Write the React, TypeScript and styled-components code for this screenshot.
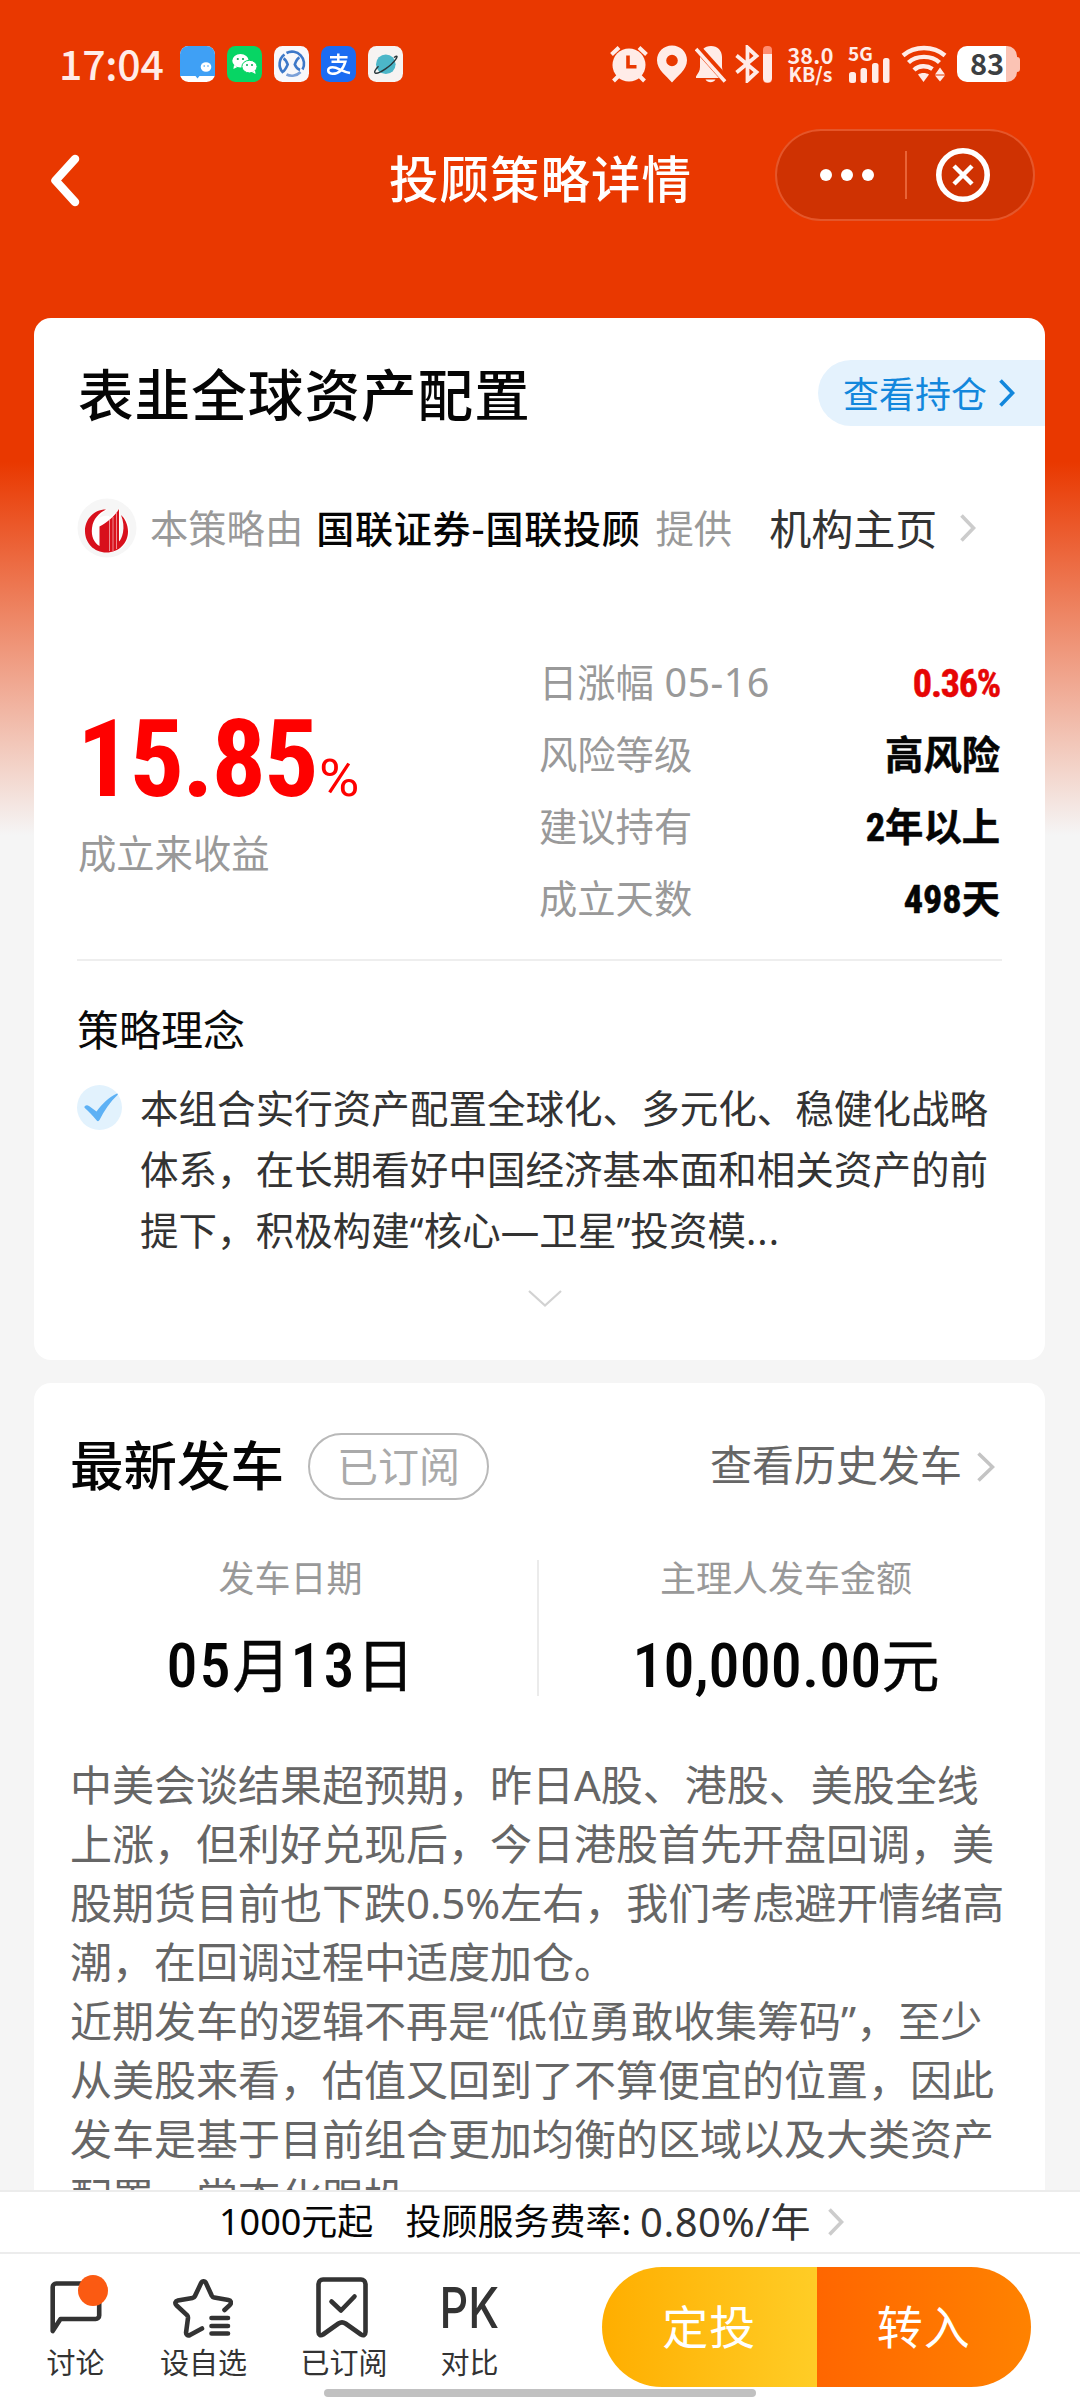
import React from "react";
import styled, { createGlobalStyle } from "styled-components";

const sans = `"Noto Sans", "Noto Sans CJK SC", sans-serif`;
const cjk = `"Noto Sans CJK SC", "Noto Sans", sans-serif`;
const din = `"Roboto Condensed", "Noto Sans CJK SC", sans-serif`;

const GlobalStyle = createGlobalStyle`
  * { box-sizing: border-box; }
  body { margin: 0; background: #f5f5f5; }
`;

const Screen = styled.div`
  width: 1080px;
  height: 2400px;
  display: flex;
  flex-direction: column;
  overflow: hidden;
  background: linear-gradient(180deg, #e93800 0, #e93800 462px, #f5f5f5 835px);
  font-family: ${sans};
  white-space: nowrap;
  svg { display: block; flex: none; }
`;

/* ---------- status bar ---------- */
const StatusBar = styled.div`
  height: 129px;
  padding: 46px 60px 47px 59px;
  display: flex;
  align-items: center;
  color: #ffece8;
`;
const Clock = styled.span`
  width: 121px;
  font: 500 41px/36px ${cjk};
  letter-spacing: -0.2px;
  margin-top: -4px;
`;
const AppIcons = styled.div`
  display: flex;
  gap: 12px;
`;
const StatusIcons = styled.div`
  margin-left: auto;
  display: flex;
  align-items: center;
  height: 38px;
`;
const NetSpeed = styled.div`
  margin-left: 14px;
  width: 47px;
  display: flex;
  flex-direction: column;
  align-items: center;
  font: 700 19.5px/19px "Noto Sans CJK SC", sans-serif;
  span:first-child { font-size: 21.5px; letter-spacing: 0.3px; }
`;
const Signal = styled.div`
  margin-left: 14px;
  width: 44px;
  height: 36px;
  display: flex;
  flex-direction: column;
  justify-content: space-between;
`;
const SignalLabel = styled.span`
  font: 700 19px/14px "Noto Sans CJK SC", sans-serif;
  height: 12px;
`;
const Gap = styled.i<{ $w: number }>`
  width: ${(p) => p.$w}px;
`;
const Battery = styled.div`
  display: flex;
  align-items: center;
  margin-left: 10px;
`;
const BatteryBody = styled.div`
  width: 60px;
  height: 36px;
  border-radius: 10px;
  display: flex;
  align-items: center;
  justify-content: center;
  background: linear-gradient(90deg, #fff 0, #fff 49px, #fbc3b4 49px);
  color: #3c3f42;
  font: 600 29px/33px "Noto Sans CJK SC", sans-serif;
  padding-bottom: 3px;
`;
const BatteryTip = styled.i`
  width: 3px;
  height: 15px;
  border-radius: 0 3px 3px 0;
  background: #fbc3b4;
`;

/* ---------- navigation ---------- */
const NavBar = styled.div`
  height: 91px;
  margin-bottom: 98px;
  padding: 0 45px 0 46px;
  display: grid;
  grid-template-columns: 260px 1fr 260px;
  align-items: center;
  color: #fff;
`;
const NavTitle = styled.h1`
  margin: 4px 0 0 0;
  text-align: center;
  font: 500 49.5px/60px ${cjk};
  letter-spacing: 1px;
`;
const BackSlot = styled.div`
  padding: 10px 0 0 1px;
`;
const Capsule = styled.div`
  width: 260px;
  height: 92px;
  border-radius: 46px;
  border: 2px solid rgba(255, 130, 90, 0.45);
  background: #cf3202;
  display: flex;
  align-items: center;
`;
const MoreDots = styled.div`
  width: 128px;
  padding-left: 43px;
  display: flex;
  gap: 9px;
  i { width: 12px; height: 12px; border-radius: 50%; background: #fff; }
`;
const CapsuleLine = styled.i`
  width: 1.5px;
  height: 48px;
  margin-right: 28px;
  background: rgba(255, 140, 100, 0.55);
`;

/* ---------- cards ---------- */
const Content = styled.main`
  flex: 1;
  min-height: 0;
  overflow: hidden;
  padding: 0 35px 0 34px;
  display: flex;
  flex-direction: column;
  gap: 23px;
`;
const Card = styled.section<{ $h: number }>`
  flex: none;
  height: ${(p) => p.$h}px;
  border-radius: 17px;
  background: #fff;
  overflow: hidden;
`;

const TitleRow = styled.div`
  margin-top: 42px;
  padding-left: 44px;
  height: 66px;
  display: flex;
  justify-content: space-between;
  align-items: center;
`;
const FundName = styled.h2`
  margin: 0 0 2px;
  font: 500 55.5px/66px ${cjk};
  letter-spacing: 1.1px;
  color: #050505;
`;
const HoldingsPill = styled.a`
  width: 227px;
  height: 66px;
  padding-left: 25px;
  border-radius: 33px 0 0 33px;
  display: flex;
  align-items: center;
  gap: 12px;
  background: #e4f2fd;
  color: #1287dc;
  font: 400 36px/64px ${cjk};
  span { height: 66px; }
`;

const ProviderRow = styled.div`
  margin-top: 72px;
  padding-left: 43px;
  height: 60px;
  display: flex;
  align-items: center;
  font: 400 38.3px/58px ${cjk};
  color: #999;
  > span, > a > span { height: 60px; }
`;
const ProviderLead = styled.span`
  margin-left: 13px;
`;
const ProviderName = styled.span`
  margin-left: 13px;
  font-weight: 500;
  font-size: 38px;
  letter-spacing: 0.75px;
  color: #050505;
`;
const ProviderTail = styled.span`
  margin-left: 15px;
`;
const OrgLink = styled.a`
  margin-left: 37px;
  display: flex;
  align-items: center;
  gap: 23px;
  font-size: 42px;
  color: #333;
`;

const Stats = styled.div`
  margin: 88px 45px 0 43px;
  height: 288px;
  display: grid;
  grid-template-columns: 462px 1fr;
`;
const ReturnBlock = styled.div`
  padding-top: 58px;
`;
const ReturnValue = styled.div`
  display: flex;
  align-items: baseline;
  height: 110px;
  color: #fe0100;
  font: 700 108px/110px ${din};
  letter-spacing: -2px;
  margin-left: 0;
  small { font: 400 51px/60px Roboto, sans-serif; margin-left: 2px; letter-spacing: 0; transform: scaleX(1.08); transform-origin: left; }
`;
const ReturnLabel = styled.div`
  margin: 9px 0 0 1px;
  font: 400 38.3px/58px ${cjk};
  color: #999;
`;
const StatTable = styled.dl`
  margin: 0;
  display: flex;
  flex-direction: column;
`;
const StatRow = styled.div`
  height: 72px;
  display: flex;
  justify-content: space-between;
  align-items: center;
`;
const StatName = styled.dt`
  font: 400 38.3px/72px ${sans};
  color: #999;
  span { font-size: 39.5px; letter-spacing: 0.4px; }
`;
const StatValue = styled.dd<{ $up?: boolean }>`
  margin: 3px 0 0;
  font: 700 38.3px/72px ${din};
  letter-spacing: ${(p) => (p.$up ? -1.3 : 0)}px;
  color: ${(p) => (p.$up ? "#e60505" : "#050505")};
  -webkit-text-stroke: 0.5px currentColor;
`;

const Divider = styled.hr`
  margin: 25px 43px 0;
  border: 0;
  height: 2px;
  background: #eee;
`;
const Subheading = styled.h3`
  margin: 45px 0 0 43px;
  font: 400 42px/44px ${cjk};
  color: #0a0a0a;
`;
const Idea = styled.div`
  margin: 28px 0 0 43px;
  display: flex;
`;
const CheckBadge = styled.div`
  padding-top: 7px;
  width: 63px;
`;
const IdeaText = styled.p`
  margin: 0;
  font: 400 38.5px/61px ${sans};
  letter-spacing: 0.05px;
  color: #333;
`;
const ExpandToggle = styled.div`
  margin-top: 29px;
  padding-left: 494px;
`;
const Ellipsis = styled.span`
  letter-spacing: 1px;
`;

/* ---------- latest call card ---------- */
const CallHeader = styled.div`
  margin-top: 50px;
  height: 67px;
  padding: 0 50px 0 36px;
  display: flex;
  align-items: center;
`;
const CallTitle = styled.h2`
  margin: 0 0 8px;
  width: 238px;
  font: 500 53.5px/66px ${cjk};
  color: #050505;
`;
const SubscribedTag = styled.span`
  width: 181px;
  height: 67px;
  border: 2px solid #b9b9b9;
  border-radius: 34px;
  text-align: center;
  font: 400 41px/58px ${cjk};
  color: #aaa;
`;
const HistoryLink = styled.a`
  margin-left: auto;
  display: flex;
  align-items: center;
  gap: 15px;
  font: 400 42px/62px ${cjk};
  color: #666;
  span { padding-bottom: 7px; }
`;
const CallFigures = styled.div`
  margin: 60px 0 0;
  height: 136px;
  display: grid;
  grid-template-columns: 503px 2px 1fr;
  grid-template-rows: 136px;
`;
const FigureLine = styled.i`
  background: #ebebeb;
`;
const Figure = styled.div<{ $shift: number; $track: number }>`
  margin-top: -4px;
  padding-left: ${(p) => Math.max(p.$shift, 0)}px;
  padding-right: ${(p) => Math.max(-p.$shift, 0)}px;
  letter-spacing: ${(p) => p.$track}px;
  display: flex;
  flex-direction: column;
  align-items: center;
`;
const FigureLabel = styled.span`
  font: 400 36px/40px ${cjk};
  letter-spacing: 0;
  color: #999;
`;
const FigureValue = styled.span`
  margin-top: 28px;
  font: 500 62px/76px ${din};
  color: #050505;
  em { font: 400 58px/76px ${cjk}; letter-spacing: 0; -webkit-text-stroke: 0.5px #050505; }
`;
const Article = styled.p`
  margin: 59px 0 0 36px;
  font: 400 42px/59px ${sans};
  color: #666;
`;

/* ---------- footer ---------- */
const Footer = styled.footer`
  flex: none;
  height: 210px;
  background: #fff;
  position: relative;
`;
const FeeBar = styled.div`
  height: 64px;
  padding-left: 219px;
  border-top: 2px solid #ececec;
  border-bottom: 2px solid #ececec;
  display: flex;
  align-items: center;
  color: #050505;
  font: 400 36px/58px ${sans};
`;
const FeeLabel = styled.span`
  margin-left: 32px;
`;
const FeeRate = styled.span`
  margin: 0 17px 1px 9px;
  font-size: 40px;
  letter-spacing: 0.5px;
  color: #333;
`;
const ActionBar = styled.div`
  height: 146px;
  display: flex;
`;
const Tabs = styled.nav`
  padding: 21px 0 0 18px;
  width: 602px;
  display: grid;
  grid-template-columns: 115px 141px 140px 111px;
  align-content: start;
`;
const Tab = styled.a`
  display: flex;
  flex-direction: column;
  align-items: center;
  color: #333;
  font: 400 29px/36px ${cjk};
`;
const TabIcon = styled.div<{ $nudge?: number }>`
  height: 64px;
  margin-bottom: 4px;
  margin-right: ${(p) => p.$nudge ?? 0}px;
  position: relative;
`;
const NoticeDot = styled.i`
  position: absolute;
  right: -6px;
  top: 0;
  width: 30px;
  height: 31px;
  border-radius: 50%;
  background: #fb5a12;
`;
const PkMark = styled.span`
  display: block;
  font: 500 56px/66px Inter, sans-serif;
  transform: scaleX(0.8);
`;
const Actions = styled.div`
  margin-top: 13px;
  width: 429px;
  height: 120px;
  display: flex;
  border-radius: 60px;
  overflow: hidden;
`;
const ActionButton = styled.button<{ $from: string; $to: string }>`
  flex: 1;
  border: 0;
  padding: 0 0 6px;
  background: linear-gradient(90deg, ${(p) => p.$from}, ${(p) => p.$to});
  color: #fff;
  font: 400 46px/114px ${cjk};
  letter-spacing: 1px;
`;
const HomeIndicator = styled.i`
  position: absolute;
  left: 324px;
  bottom: 3px;
  width: 432px;
  height: 8px;
  border-radius: 4px;
  background: #c1c1c1;
`;

/* ---------- drawings ---------- */
const Chevron = ({ color, w = 16, h = 28, sw = 3.6 }: { color: string; w?: number; h?: number; sw?: number }) => (
  <svg width={w} height={h} viewBox={`0 0 ${w} ${h}`} fill="none" stroke={color} strokeWidth={sw}>
    <path d={`M1.5 1.5 L${w - 2.5} ${h / 2} L1.5 ${h - 1.5}`} />
  </svg>
);

const MessageApp = () => (
  <svg width="35" height="36" viewBox="0 0 35 36">
    <rect width="35" height="36" rx="8.500" fill="#fff" />
    <path d="M0 30V8.500A8.500 8.500 0 0 1 8.500 0h18A8.500 8.500 0 0 1 35 8.500V30H19.500l-2 2.500-2-2.500z" fill="#3fa0f5" />
    <ellipse cx="26" cy="21" rx="5.300" ry="4.800" fill="#fff" />
    <circle cx="24.200" cy="20" r=".8" fill="#3fa0f5" />
    <circle cx="28" cy="20" r=".8" fill="#3fa0f5" />
  </svg>
);
const WechatApp = () => (
  <svg width="35" height="36" viewBox="0 0 35 36">
    <rect width="35" height="36" rx="8.500" fill="#07d564" />
    <ellipse cx="13.500" cy="14.800" rx="8.200" ry="6.800" fill="#fff" />
    <path d="M7 19l-.6 4 4-2z" fill="#fff" />
    <ellipse cx="22.500" cy="20.600" rx="7.600" ry="6.300" fill="#fff" stroke="#07d564" strokeWidth="1" />
    <path d="M25 26l3.600 2-.6-3.500z" fill="#fff" />
    <g fill="#07a850">
      <circle cx="10.800" cy="13" r="1.100" />
      <circle cx="16" cy="13" r="1.100" />
      <circle cx="20" cy="19" r="1" />
      <circle cx="25" cy="19" r="1" />
    </g>
  </svg>
);
const RingApp = () => (
  <svg width="35" height="36" viewBox="0 0 35 36" fill="none" stroke="#3d78c8" strokeWidth="2.600">
    <rect width="35" height="36" rx="8.500" fill="#f8f8fb" stroke="none" />
    <path d="M10.500 8.500A12 12 0 0 0 8.500 26c2.500-1.500 3.500-3.500 5.200-7.500-1-3-2.200-5-4.200-6" />
    <path d="M12.500 7A12 12 0 0 1 28.500 23.500" />
    <path d="M12.500 28.500a12 12 0 0 0 14-2.500" stroke="#7ba0d8" />
    <path d="M25.500 11.500c-2.500 1-3.500 3.500-4.700 7 1.200 3 2.200 4.500 5.200 5.500" />
  </svg>
);
const AlipayApp = () => (
  <svg width="35" height="36" viewBox="0 0 35 36" fill="none" stroke="#fff" strokeWidth="2.500">
    <rect width="35" height="36" rx="8.500" fill="#1b6cf2" stroke="none" />
    <path d="M17.300 7.500v8M9 11.300h17.500M10.500 15.800h13.800c-1.800 6-6 12.200-13 12-5.500-.5-5.500-6.500.2-6.600 5.500 0 9 4.300 17.500 5.700" />
  </svg>
);
const PlanetApp = () => (
  <svg width="35" height="36" viewBox="0 0 35 36" fill="none">
    <rect width="35" height="36" rx="8.500" fill="#f6f3f2" />
    <circle cx="17.800" cy="18.300" r="9.800" fill="#4cb6c8" />
    <path d="M26 11.500c3.500-2.300 4-1.500 1.500 2.200C23.500 19.500 11.500 28 7.500 27.200c-2-.7 0-4 3-7" stroke="#28363a" strokeWidth="1.400" />
  </svg>
);

const AlarmIcon = () => (
  <svg width="38" height="38" viewBox="0 0 38 38" fill="#ffece8" stroke="#ffece8" strokeWidth="4">
    <circle cx="19" cy="20" r="16.500" stroke="none" />
    <path d="M1.500 9.500l7.500-7M36.500 9.500l-7.500-7M3.500 36l5-5M34.500 36l-5-5" />
    <path d="M18 10.500v11.200h8.500" fill="none" stroke="#e93800" strokeWidth="3.600" />
  </svg>
);
const PinIcon = () => (
  <svg width="30" height="38" viewBox="0 0 30 38" fill="#ffece8">
    <path fillRule="evenodd" d="M15 .5C6.500.5 0 7 0 15.300 0 25 10 31.500 15 37.500c5-6 15-12.500 15-22.200C30 7 23.500.5 15 .5zm0 9.200a5.800 5.800 0 1 1 0 11.600 5.800 5.800 0 0 1 0-11.600z" />
  </svg>
);
const BellOffIcon = () => (
  <svg width="32" height="38" viewBox="0 0 32 38" fill="#ffece8">
    <path d="M16 1C9.500 1 5 5.500 5 12v10c0 4-2 6-4 9.500V33h30v-1.500c-2-3.500-4-5.500-4-9.500V12C27 5.500 22.500 1 16 1z" />
    <path d="M10.500 34.500h10c-2 3.500-8 3.500-10 0z" />
    <path d="M1 1.500l31 34.500" stroke="#e93800" strokeWidth="8" />
    <path d="M1 4l29 32.500" stroke="#ffece8" strokeWidth="3.600" />
  </svg>
);
const BluetoothIcon = () => (
  <svg width="38" height="38" viewBox="0 0 38 38" fill="none" stroke="#ffece8" strokeWidth="3.800">
    <path d="M1.500 10.500l20 16.500-9 8.500v-33l9 8.500-20 16.500" />
    <rect x="28" y="1" width="9" height="37" rx="4" fill="#ff8d70" stroke="none" />
    <path d="M28 9h9v24a4.500 4.500 0 0 1-9 0z" fill="#ffece8" stroke="none" />
  </svg>
);
const SignalBars = () => (
  <svg width="42" height="25" viewBox="0 0 42 25" fill="#ffece8">
    <rect x="1" y="14" width="7" height="11" rx="2.500" />
    <rect x="12.500" y="10" width="6.500" height="15" rx="2.500" />
    <rect x="24" y="5" width="6.500" height="20" rx="2.500" />
    <rect x="35" y="0" width="6.500" height="25" rx="2.500" />
  </svg>
);
const WifiIcon = () => (
  <svg width="46" height="38" viewBox="0 0 46 38" fill="none" stroke="#ffece8" strokeWidth="4.400">
    <path d="M2 10.500c11.500-10 30.500-10 42 0M7.500 17.500c8-7.500 23-7.500 31 0M13 25c5-4.800 13-4.800 18.500-1" />
    <path d="M17 29.500c3-2 8-2 11 0L22.500 37z" fill="#ffece8" stroke="none" />
    <path d="M39 22.500l5 7H34zM39 36.500l-5-6h10z" fill="#ffece8" stroke="none" />
  </svg>
);

const BackIcon = () => (
  <svg width="36" height="56" viewBox="0 0 36 56" fill="none" stroke="#fff" strokeWidth="8.500" strokeLinecap="round" strokeLinejoin="round">
    <path d="M28 7L8.500 28.500 28 50" />
  </svg>
);
const CloseIcon = () => (
  <svg width="56" height="56" viewBox="0 0 56 56" fill="none" stroke="#fff">
    <circle cx="28" cy="28" r="24.200" strokeWidth="5.600" />
    <path d="M19 19l18 18M37 19L19 37" strokeWidth="4.500" />
  </svg>
);
const OrgLogo = () => (
  <svg width="60" height="60" viewBox="0 0 60 60">
    <circle cx="30" cy="30" r="29.500" fill="#f6f6f6" />
    <path d="M31 11.500A21.500 21.500 0 1 0 46 17.500c5 8 4.500 21-3 27.500V11L33 19c-2-2-8-1.500-12 2 2.500-4.500 6-8 10-9.500z" fill="#fff" />
    <path d="M29 11.500C16 11.500 8 22 8 33c0 12 9 21.500 21.500 21.500S51 45 51 33.500c0-7-3-13-7-16.500 2.500 6 3 12 2 17.500-1 5-2.500 7.500-4 9V11C37 19 30 24.500 22.500 28.500V48C17 45 14 38 15 30c1-9 7-15 14-18.500z" fill="#d8101c" />
    <path d="M32.500 22v31M36 19v34M39.500 15v36" stroke="#f09a9e" strokeWidth="0.900" />
  </svg>
);
const CheckCircle = () => (
  <svg width="45" height="45" viewBox="0 0 45 45">
    <circle cx="22.500" cy="22.500" r="22.500" fill="#e2f2fd" />
    <path d="M7.500 21.500c1.500-1.500 3-1.500 4.500-.5l7.500 5.500C25 19 32 12 40 8.500c1 0 1 .8.5 1.500C33 17 27 26 22.500 35c-.8 1.500-2 1.500-3 .2-4-5-8-9-12-12.500z" fill="#5db1f5" />
  </svg>
);
const ChevronDown = () => (
  <svg width="34" height="17" viewBox="0 0 34 17" fill="none" stroke="#d2d2d2" strokeWidth="2.200">
    <path d="M1 1l16 14.500L33 1" />
  </svg>
);
const ChatIcon = () => (
  <svg width="52" height="64" viewBox="0 0 52 64" fill="none" stroke="#333" strokeWidth="4.600" strokeLinejoin="round">
    <path d="M2.700 56V12a3.500 3.500 0 0 1 3.500-3.500h39.500a3.500 3.500 0 0 1 3.500 3.500v28.500a3.500 3.500 0 0 1-3.500 3.500H10.500z" />
  </svg>
);
const StarListIcon = () => (
  <svg width="60" height="64" viewBox="0 0 60 64" fill="none" stroke="#333" strokeWidth="4.600" strokeLinecap="round" strokeLinejoin="round">
    <path d="M29 53.500L17 60c-2.500 1-4.200-.2-3.900-2.800L15 43c.1-1.200-.2-2-1-2.900L3.400 30.200c-1.800-1.900-1.200-4.300 1.400-4.800l14.700-2.500c1.100-.2 1.900-.8 2.400-1.800l6.200-13c1.200-2.400 3.700-2.400 4.900 0l5.800 12.700c.5 1 1.300 1.600 2.400 1.800L55.400 25c2.600.4 3.400 2.700 1.600 4.800L51.500 35" />
    <path d="M38.500 43H55M38.500 51H55M38.500 58.500H55" />
  </svg>
);
const BookmarkIcon = () => (
  <svg width="52" height="64" viewBox="0 0 52 64" fill="none" stroke="#333" strokeWidth="4.600" strokeLinecap="round" strokeLinejoin="round">
    <path d="M7 4.500h38a4.500 4.500 0 0 1 4.500 4.500v48c0 3-2 4-4.500 2.500L29.500 48.500c-2.300-1.500-4.700-1.500-7 0L7 59.500C4.500 61 2.500 60 2.500 57V9A4.500 4.500 0 0 1 7 4.500z" />
    <path d="M15.500 26.500L25 35.500 38.500 21.500" />
  </svg>
);

const stats = [
  { name: "日涨幅", date: " 05-16", value: "0.36%", up: true },
  { name: "风险等级", value: "高风险" },
  { name: "建议持有", value: "2年以上" },
  { name: "成立天数", value: "498天" },
];
const ideaLines = [
  "本组合实行资产配置全球化、多元化、稳健化战略",
  "体系，在长期看好中国经济基本面和相关资产的前",
  "提下，积极构建“核心—卫星”投资模",
];
const articleLines = [
  "中美会谈结果超预期，昨日A股、港股、美股全线",
  "上涨，但利好兑现后，今日港股首先开盘回调，美",
  "股期货目前也下跌0.5%左右，我们考虑避开情绪高",
  "潮，在回调过程中适度加仓。",
  "近期发车的逻辑不再是“低位勇敢收集筹码”，至少",
  "从美股来看，估值又回到了不算便宜的位置，因此",
  "发车是基于目前组合更加均衡的区域以及大类资产",
  "配置、常态化跟投",
];

const withBreaks = (lines: string[]) =>
  lines.map((line, i) => (
    <React.Fragment key={i}>
      {i > 0 && <br />}
      {line}
    </React.Fragment>
  ));

export default function App() {
  return (
    <Screen>
      <GlobalStyle />
      <StatusBar>
        <Clock>17:04</Clock>
        <AppIcons>
          <MessageApp />
          <WechatApp />
          <RingApp />
          <AlipayApp />
          <PlanetApp />
        </AppIcons>
        <StatusIcons>
          <AlarmIcon />
          <Gap $w={9} />
          <PinIcon />
          <Gap $w={8} />
          <BellOffIcon />
          <Gap $w={8} />
          <BluetoothIcon />
          <NetSpeed>
            <span>38.0</span>
            <span>KB/s</span>
          </NetSpeed>
          <Signal>
            <SignalLabel>5G</SignalLabel>
            <SignalBars />
          </Signal>
          <Gap $w={9} />
          <WifiIcon />
          <Battery>
            <BatteryBody>83</BatteryBody>
            <BatteryTip />
          </Battery>
        </StatusIcons>
      </StatusBar>

      <NavBar>
        <BackSlot>
          <BackIcon />
        </BackSlot>
        <NavTitle>投顾策略详情</NavTitle>
        <Capsule>
          <MoreDots>
            <i />
            <i />
            <i />
          </MoreDots>
          <CapsuleLine />
          <CloseIcon />
        </Capsule>
      </NavBar>

      <Content>
        <Card $h={1042}>
          <TitleRow>
            <FundName>表韭全球资产配置</FundName>
            <HoldingsPill>
              <span>查看持仓</span>
              <Chevron color="#1287dc" />
            </HoldingsPill>
          </TitleRow>
          <ProviderRow>
            <OrgLogo />
            <ProviderLead>本策略由</ProviderLead>
            <ProviderName>国联证券-国联投顾</ProviderName>
            <ProviderTail>提供</ProviderTail>
            <OrgLink>
              <span>机构主页</span>
              <Chevron color="#ccc" />
            </OrgLink>
          </ProviderRow>
          <Stats>
            <ReturnBlock>
              <ReturnValue>
                15.85<small>%</small>
              </ReturnValue>
              <ReturnLabel>成立来收益</ReturnLabel>
            </ReturnBlock>
            <StatTable>
              {stats.map((s) => (
                <StatRow key={s.name}>
                  <StatName>
                    {s.name}
                    {s.date && <span>{s.date}</span>}
                  </StatName>
                  <StatValue $up={s.up}>{s.value}</StatValue>
                </StatRow>
              ))}
            </StatTable>
          </Stats>
          <Divider />
          <Subheading>策略理念</Subheading>
          <Idea>
            <CheckBadge>
              <CheckCircle />
            </CheckBadge>
            <IdeaText>
              {withBreaks(ideaLines)}
              <Ellipsis>...</Ellipsis>
            </IdeaText>
          </Idea>
          <ExpandToggle>
            <ChevronDown />
          </ExpandToggle>
        </Card>

        <Card $h={900}>
          <CallHeader>
            <CallTitle>最新发车</CallTitle>
            <SubscribedTag>已订阅</SubscribedTag>
            <HistoryLink>
              <span>查看历史发车</span>
              <Chevron color="#c4c4c4" w={18} h={30} />
            </HistoryLink>
          </CallHeader>
          <CallFigures>
            <Figure $shift={10} $track={2}>
              <FigureLabel>发车日期</FigureLabel>
              <FigureValue>
                05<em>月</em>13<em>日</em>
              </FigureValue>
            </Figure>
            <FigureLine />
            <Figure $shift={-12} $track={0.1}>
              <FigureLabel>主理人发车金额</FigureLabel>
              <FigureValue>
                10,000.00<em>元</em>
              </FigureValue>
            </Figure>
          </CallFigures>
          <Article>{withBreaks(articleLines)}</Article>
        </Card>
      </Content>

      <Footer>
        <FeeBar>
          <span>1000元起</span>
          <FeeLabel>投顾服务费率:</FeeLabel>
          <FeeRate>0.80%/年</FeeRate>
          <Chevron color="#ccc" />
        </FeeBar>
        <ActionBar>
          <Tabs>
            <Tab>
              <TabIcon>
                <ChatIcon />
                <NoticeDot />
              </TabIcon>
              讨论
            </Tab>
            <Tab>
              <TabIcon $nudge={2}>
                <StarListIcon />
              </TabIcon>
              设自选
            </Tab>
            <Tab>
              <TabIcon $nudge={4}>
                <BookmarkIcon />
              </TabIcon>
              已订阅
            </Tab>
            <Tab>
              <TabIcon>
                <PkMark>PK</PkMark>
              </TabIcon>
              对比
            </Tab>
          </Tabs>
          <Actions>
            <ActionButton $from="#ffae00" $to="#ffcd26">定投</ActionButton>
            <ActionButton $from="#ff6600" $to="#ff8200">转入</ActionButton>
          </Actions>
        </ActionBar>
        <HomeIndicator />
      </Footer>
    </Screen>
  );
}
